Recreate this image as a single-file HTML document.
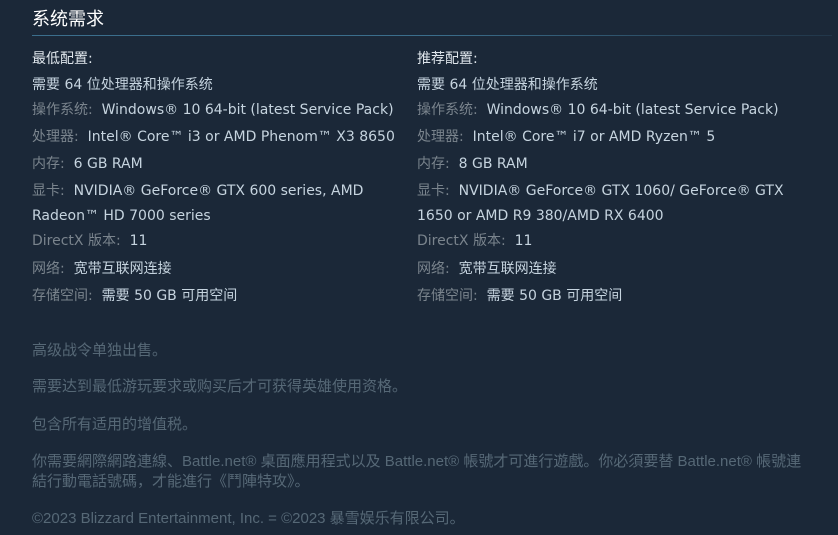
<!DOCTYPE html>
<html><head><meta charset="utf-8"><style>
body{margin:0;width:838px;height:535px;background:#1b2838;overflow:hidden;position:relative;font-family:"DejaVu Sans","Noto Sans CJK SC",sans-serif;}
.a{position:absolute;white-space:nowrap;line-height:20px;font-size:14px;color:#c6d4df;}
.l{color:#7a848d;}
.h{color:#dfe6ec;}
.f{position:absolute;white-space:nowrap;line-height:20px;font-size:15px;color:#566876;font-family:"Liberation Sans","Noto Sans CJK SC",sans-serif;left:32px;}
.t{position:absolute;left:32px;top:7px;font-size:18px;color:#fff;font-family:"Liberation Sans","Noto Sans CJK SC",sans-serif;line-height:24px;}
.line{position:absolute;left:32px;top:35px;width:800px;height:1px;background:linear-gradient(to right,#3b6e8c,#3b6e8c 50%,rgba(59,110,140,0.2));}
</style></head><body>
<div class="t">系统需求</div>
<div class="line"></div>

<div class="a h" style="left:32px;top:49px">最低配置:</div>
<div class="a" style="left:32px;top:75px">需要 64 位处理器和操作系统</div>
<div class="a" style="left:32px;top:100px"><span class="l">操作系统:</span>&nbsp; Windows® 10 64-bit (latest Service Pack)</div>
<div class="a" style="left:32px;top:127px"><span class="l">处理器:</span>&nbsp; Intel® Core™ i3 or AMD Phenom™ X3 8650</div>
<div class="a" style="left:32px;top:154px"><span class="l">内存:</span>&nbsp; 6 GB RAM</div>
<div class="a" style="left:32px;top:181px"><span class="l">显卡:</span>&nbsp; NVIDIA® GeForce® GTX 600 series, AMD</div>
<div class="a" style="left:32px;top:206px">Radeon™ HD 7000 series</div>
<div class="a" style="left:32px;top:231px"><span class="l">DirectX 版本:</span>&nbsp; 11</div>
<div class="a" style="left:32px;top:259px"><span class="l">网络:</span>&nbsp; 宽带互联网连接</div>
<div class="a" style="left:32px;top:286px"><span class="l">存储空间:</span>&nbsp; 需要 50 GB 可用空间</div>

<div class="a h" style="left:417px;top:49px">推荐配置:</div>
<div class="a" style="left:417px;top:75px">需要 64 位处理器和操作系统</div>
<div class="a" style="left:417px;top:100px"><span class="l">操作系统:</span>&nbsp; Windows® 10 64-bit (latest Service Pack)</div>
<div class="a" style="left:417px;top:127px"><span class="l">处理器:</span>&nbsp; Intel® Core™ i7 or AMD Ryzen™ 5</div>
<div class="a" style="left:417px;top:154px"><span class="l">内存:</span>&nbsp; 8 GB RAM</div>
<div class="a" style="left:417px;top:181px"><span class="l">显卡:</span>&nbsp; NVIDIA® GeForce® GTX 1060/ GeForce® GTX</div>
<div class="a" style="left:417px;top:206px">1650 or AMD R9 380/AMD RX 6400</div>
<div class="a" style="left:417px;top:231px"><span class="l">DirectX 版本:</span>&nbsp; 11</div>
<div class="a" style="left:417px;top:259px"><span class="l">网络:</span>&nbsp; 宽带互联网连接</div>
<div class="a" style="left:417px;top:286px"><span class="l">存储空间:</span>&nbsp; 需要 50 GB 可用空间</div>

<div class="f" style="top:341px">高级战令单独出售。</div>
<div class="f" style="top:377px">需要达到最低游玩要求或购买后才可获得英雄使用资格。</div>
<div class="f" style="top:415px">包含所有适用的增值税。</div>
<div class="f" style="top:452px">你需要網際網路連線、Battle.net® 桌面應用程式以及 Battle.net® 帳號才可進行遊戲。你必須要替 Battle.net® 帳號連</div>
<div class="f" style="top:472px">結行動電話號碼，才能進行《鬥陣特攻》。</div>
<div class="f" style="top:509px">©2023 Blizzard Entertainment, Inc. = ©2023 暴雪娱乐有限公司。</div>
</body></html>
